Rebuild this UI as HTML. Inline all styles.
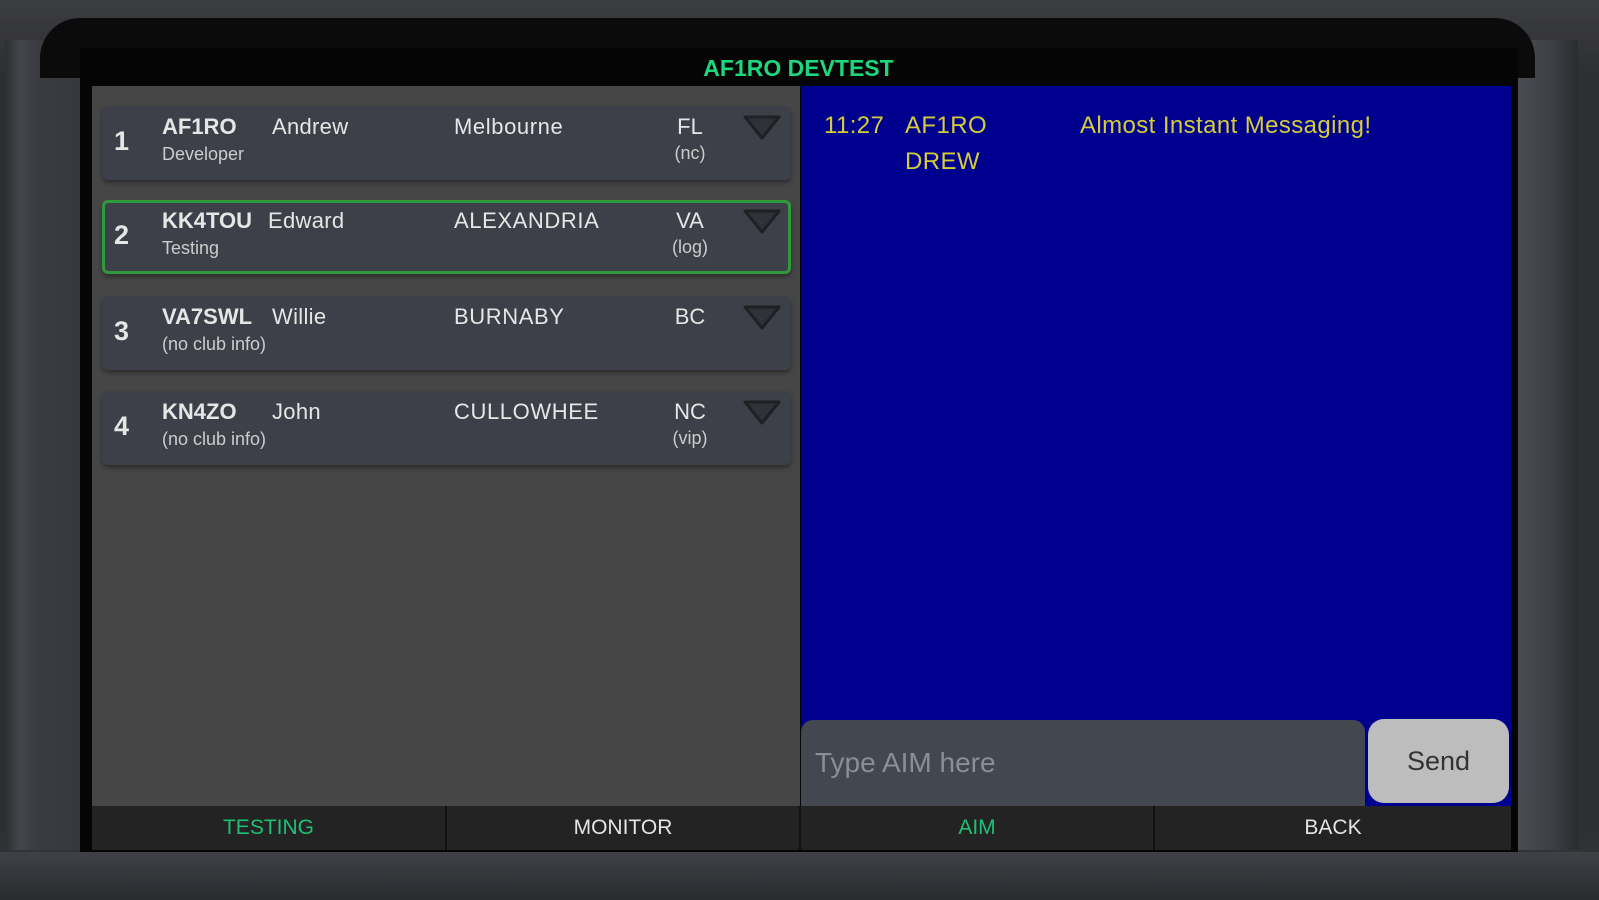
<!DOCTYPE html>
<html><head><meta charset="utf-8"><style>
*{margin:0;padding:0;box-sizing:border-box}
body{width:1599px;height:900px;overflow:hidden;background:#2a2b2e;font-family:"Liberation Sans",sans-serif;position:relative}
.a{position:absolute}
.row{position:absolute;left:102px;width:689px;height:74px;background:#3d4048;border-radius:6px;box-shadow:0 3px 4px rgba(0,0,0,.35);color:#e6e6e6}
.row .n{position:absolute;left:12px;top:20px;font-size:27px;font-weight:bold}
.row .c{position:absolute;left:60px;top:8px;font-size:22px;font-weight:bold}
.row .nm{position:absolute;left:170px;top:8px;font-size:22px;letter-spacing:.3px}
.row .ct{position:absolute;left:352px;top:8px;font-size:22px;letter-spacing:.6px}
.row .st{position:absolute;left:560px;width:56px;text-align:center;top:8px;font-size:22px;line-height:26px}
.row .st small{font-size:18px;display:block;color:#ccc}
.row .sub{position:absolute;left:60px;top:38px;font-size:18px;color:#ccc}
.row svg{position:absolute;left:640px;top:8px}
.tab{position:absolute;top:806px;height:44px;background:#232323;color:#e4e4e4;font-size:21px;text-align:center;line-height:44px;border-right:2px solid #111}
.y{position:absolute;color:#d6cc38;font-size:24px;letter-spacing:.4px}
</style></head><body>
<div class="a" style="left:0;top:0;width:1599px;height:900px;background:linear-gradient(#3c3d41,#2e2f33 8%,#2e2f33 92%,#3a3b3f)"></div>
<div class="a" style="left:5px;top:40px;width:75px;height:810px;background:linear-gradient(90deg,#2c2e32,#45474c 20%,#3a3c41 40%,#36383d)"></div>
<div class="a" style="left:1518px;top:40px;width:60px;height:810px;background:linear-gradient(90deg,#4a4c51,#3c3e43 60%,#2a2c30)"></div>
<div class="a" style="left:40px;top:18px;width:1495px;height:60px;background:#0b0b0c;border-radius:40px 40px 0 0"></div>
<div class="a" style="left:80px;top:48px;width:1438px;height:812px;background:#050505"></div>
<div class="a" style="left:0;top:852px;width:1599px;height:48px;background:linear-gradient(#3f4146,#2a2b2f)"></div>
<div class="a" style="left:82px;top:52px;width:1433px;height:32px;text-align:center;color:#1ed67c;font-weight:bold;font-size:23px;line-height:32px">AF1RO DEVTEST</div>
<div class="a" style="left:92px;top:86px;width:708px;height:720px;background:#464646"></div>
<div class="a" style="left:801px;top:86px;width:710px;height:720px;background:#00008f"></div>

<div class="row" style="top:106px"><div class="n">1</div><div class="c">AF1RO</div><div class="nm">Andrew</div><div class="ct">Melbourne</div><div class="st">FL<small>(nc)</small></div><div class="sub">Developer</div><svg width="40" height="28"><path d="M3 3H37L20 24Z" fill="#2f3238" stroke="#1e2024" stroke-width="3" stroke-linejoin="round"/></svg></div>
<div class="row" style="top:200px;border:3px solid #2e9a3a"><div class="n" style="left:9px;top:17px">2</div><div class="c" style="left:57px;top:5px">KK4TOU</div><div class="nm" style="top:5px;left:163px">Edward</div><div class="ct" style="left:349px;top:5px">ALEXANDRIA</div><div class="st" style="left:557px;top:5px">VA<small>(log)</small></div><div class="sub" style="left:57px;top:35px">Testing</div><svg width="40" height="28" style="left:637px;top:5px"><path d="M3 3H37L20 24Z" fill="#2f3238" stroke="#1e2024" stroke-width="3" stroke-linejoin="round"/></svg></div>
<div class="row" style="top:296px"><div class="n">3</div><div class="c">VA7SWL</div><div class="nm" style="left:170px">Willie</div><div class="ct">BURNABY</div><div class="st">BC</div><div class="sub">(no club info)</div><svg width="40" height="28"><path d="M3 3H37L20 24Z" fill="#2f3238" stroke="#1e2024" stroke-width="3" stroke-linejoin="round"/></svg></div>
<div class="row" style="top:391px"><div class="n">4</div><div class="c">KN4ZO</div><div class="nm">John</div><div class="ct">CULLOWHEE</div><div class="st">NC<small>(vip)</small></div><div class="sub">(no club info)</div><svg width="40" height="28"><path d="M3 3H37L20 24Z" fill="#2f3238" stroke="#1e2024" stroke-width="3" stroke-linejoin="round"/></svg></div>

<div class="y" style="left:824px;top:112px">11:27</div>
<div class="y" style="left:905px;top:112px">AF1RO</div>
<div class="y" style="left:905px;top:148px">DREW</div>
<div class="y" style="left:1080px;top:112px">Almost Instant Messaging!</div>

<div class="a" style="left:801px;top:720px;width:564px;height:86px;background:#434750;border-radius:12px 12px 0 0;color:#8b8e94;font-size:28px;line-height:86px;padding-left:14px">Type AIM here</div>
<div class="a" style="left:1368px;top:719px;width:141px;height:84px;background:#bdbdbd;border-radius:16px;color:#333;font-size:27px;line-height:84px;text-align:center">Send</div>

<div class="tab" style="left:92px;width:355px;color:#1fbf74">TESTING</div>
<div class="tab" style="left:447px;width:354px">MONITOR</div>
<div class="tab" style="left:801px;width:354px;color:#1fbf74">AIM</div>
<div class="tab" style="left:1155px;width:356px;border-right:none">BACK</div>
</body></html>
